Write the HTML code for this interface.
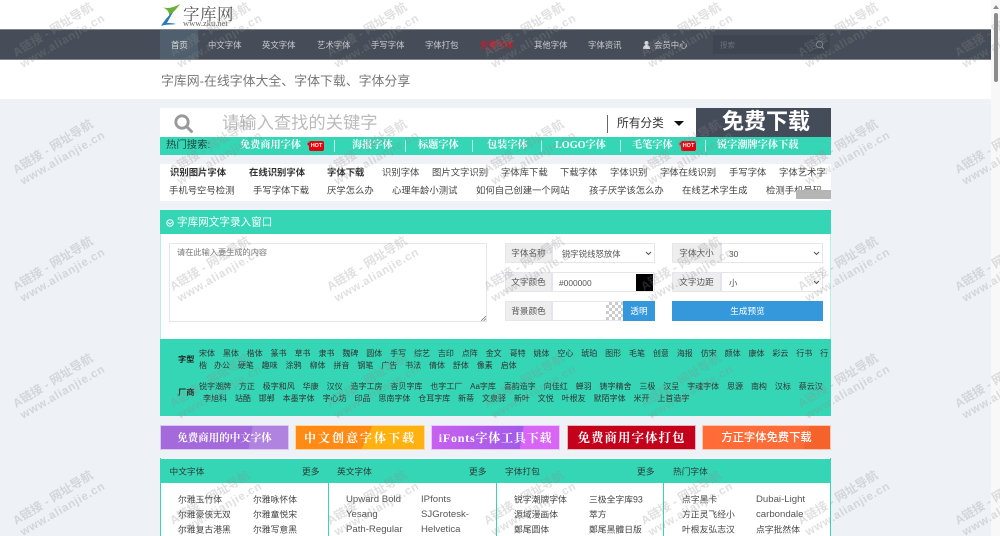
<!DOCTYPE html>
<html lang="zh-CN">
<head>
<meta charset="utf-8">
<title>字库网-在线字体大全、字体下载、字体分享</title>
<style>
html,body{margin:0;padding:0;width:1000px;height:536px;overflow:hidden;background:#fff}
body{position:relative;font-family:"Liberation Sans","Noto Sans CJK SC",sans-serif;color:#333}
.b{position:absolute;box-sizing:border-box}
.t{position:absolute;white-space:nowrap;transform:translateY(-50%);line-height:1}
.nav{font-size:8.4px;color:#c9ccd1;top:45px}
.ad{font-size:9.35px;color:#444}
.ad.s{font-weight:bold;color:#333}
.hot{font-family:"Liberation Serif","Noto Serif CJK SC",serif;font-weight:bold;color:#fff;font-size:10.2px;top:146px}
.sep{position:absolute;top:140px;width:1px;height:12px;background:#bff3e6}
.hotbadge{position:absolute;top:141px;width:15px;height:10px;background:#e8000d;border-radius:2px;color:#fff;font-size:5.5px;font-weight:bold;line-height:10px;text-align:center}
.hotbadge:before{content:"";position:absolute;left:-2px;top:1px;border-top:2px solid transparent;border-bottom:2px solid transparent;border-right:2px solid #e8000d}
.fl{font-size:8px;color:#333}
.fl span{display:inline-block;margin-right:7.9px}
.ban{position:absolute;top:425px;height:25px;color:#fff;text-align:center;line-height:25px;font-weight:bold;font-family:"Liberation Serif","Noto Serif CJK SC",serif;box-sizing:border-box}
.hd{font-size:8.7px;color:#2d3a36;top:472px}
.li{font-size:8.8px;color:#444}
.en{font-size:9.6px;color:#555}
.lab{position:absolute;background:#eee;border:1px solid #e5e5ee;box-sizing:border-box;font-size:8.6px;color:#555;text-align:center}
.inp{position:absolute;background:#fff;border:1px solid #e5e5ee;box-sizing:border-box;font-size:8.4px;color:#555}
svg.wm{position:absolute;left:0;top:0;pointer-events:none}
svg.wm text{font-family:"Liberation Sans","Noto Sans CJK SC",sans-serif;font-weight:bold;fill:#8d8d8d;fill-opacity:.27}
</style>
</head>
<body>
<div class="b" style="left:0;top:99px;width:991px;height:437px;background:#eef1f6"></div>
<div class="b" style="left:991px;top:0;width:9px;height:536px;background:#f8f8f8"></div>
<div class="b" style="left:994px;top:13px;width:4px;height:69px;background:#8b8b8b;border-radius:2px"></div>
<div class="b" style="left:993px;top:5px;width:0;height:0;border-left:3px solid transparent;border-right:3px solid transparent;border-bottom:4px solid #8b8b8b"></div>

<svg class="b" style="left:160px;top:3px" width="22" height="24" viewBox="0 0 22 24">
<path d="M2 4 C7 6 13 5 20 1 C16 7 12 10 9 14 C10 9 7 6 2 4Z" fill="#6cae3c"/>
<path d="M13 9 C9 12 4 18 1 23 C6 21 11 22 16 21 C12 20 9 20 7 20 C9 16 11 13 13 9Z" fill="#2a7ab8"/>
</svg>
<div class="t" style="left:183px;top:13px;font:16.500px 'Liberation Serif','Noto Serif CJK SC',serif;color:#555;letter-spacing:.5px">字库网</div>
<div class="t" style="left:183px;top:23px;font:8.500px 'Liberation Serif',serif;color:#666">www.zku.net</div>

<div class="b" style="left:0;top:29px;width:991px;height:31px;background:#474d58;border-top:1px solid #81858c;border-bottom:1px solid #81858c"></div>
<div class="b" style="left:160px;top:30px;width:38px;height:29px;background:#4f5f6d"></div>
<div class="t nav" style="left:171px;color:#e4e6e8">首页</div>
<div class="t nav" style="left:208px">中文字体</div>
<div class="t nav" style="left:262px">英文字体</div>
<div class="t nav" style="left:317px">艺术字体</div>
<div class="t nav" style="left:371px">手写字体</div>
<div class="t nav" style="left:425px">字体打包</div>
<div class="t nav" style="left:480px;color:#e8101c">免费字体</div>
<div class="t nav" style="left:534px">其他字体</div>
<div class="t nav" style="left:588px">字体资讯</div>
<svg class="b" style="left:643px;top:41px" width="7" height="8" viewBox="0 0 7 8"><circle cx="3.5" cy="2" r="2" fill="#d5d7da"/><path d="M0 8C0 5 1.5 4 3.5 4S7 5 7 8Z" fill="#d5d7da"/></svg>
<div class="t nav" style="left:654px">会员中心</div>
<div class="b" style="left:713px;top:35px;width:117px;height:19px;background:#3f4551"></div>
<div class="t" style="left:720px;top:45px;font-size:7.5px;color:#6a707b">搜索</div>
<svg class="b" style="left:815px;top:40px" width="10" height="10" viewBox="0 0 10 10" fill="none" stroke="#7c818a"><circle cx="4.5" cy="4.5" r="3.2"/><path d="M7 7l2 2"/></svg>

<div class="t" style="left:161px;top:82px;font-size:12.900px;color:#777">字库网-在线字体大全、字体下载、字体分享</div>

<div class="b" style="left:160px;top:108px;width:671px;height:29px;background:#fff"></div>
<svg class="b" style="left:173px;top:113px" width="21" height="21" viewBox="0 0 21 21" fill="none" stroke="#999"><circle cx="9" cy="9" r="6.2" stroke-width="2.8"/><path d="M13.5 13.5l5 5" stroke-width="3" stroke-linecap="round"/></svg>
<div class="t" style="left:222px;top:123px;font-size:17.300px;color:#bbb">请输入查找的关键字</div>
<div class="b" style="left:607px;top:115px;width:1px;height:18px;background:#666"></div>
<div class="t" style="left:617px;top:124px;font-size:11.700px;color:#333">所有分类</div>
<div class="b" style="left:674px;top:121px;width:0;height:0;border-left:5px solid transparent;border-right:5px solid transparent;border-top:5px solid #111"></div>
<div class="b" style="left:160px;top:137px;width:671px;height:18px;background:#35d6b5"></div>
<div class="b" style="left:696px;top:108px;width:135px;height:29px;background:#444b59"></div>
<div class="t" style="left:722px;top:122px;font-size:22px;font-weight:bold;color:#fff">免费下载</div>

<div class="t" style="left:166px;top:146px;font-size:10.400px;color:#24443c">热门搜索:</div>
<div class="t hot" style="left:240px">免费商用字体</div>
<div class="hotbadge" style="left:309px">HOT</div>
<div class="sep" style="left:334px"></div>
<div class="t hot" style="left:352px">海报字体</div>
<div class="sep" style="left:405px"></div>
<div class="t hot" style="left:418px">标题字体</div>
<div class="sep" style="left:472px"></div>
<div class="t hot" style="left:487px">包装字体</div>
<div class="sep" style="left:541px"></div>
<div class="t hot" style="left:555px">LOGO字体</div>
<div class="sep" style="left:620px"></div>
<div class="t hot" style="left:632px">毛笔字体</div>
<div class="hotbadge" style="left:681px">HOT</div>
<div class="sep" style="left:705px"></div>
<div class="t hot" style="left:717px">锐字潮牌字体下载</div>

<div class="b" style="left:160px;top:164px;width:671px;height:37px;background:#fff"></div>
<div class="t ad s" style="left:170px;top:173px">识别图片字体</div>
<div class="t ad s" style="left:249px;top:173px">在线识别字体</div>
<div class="t ad s" style="left:327px;top:173px">字体下载</div>
<div class="t ad" style="left:382px;top:173px">识别字体</div>
<div class="t ad" style="left:432px;top:173px">图片文字识别</div>
<div class="t ad" style="left:501px;top:173px">字体库下载</div>
<div class="t ad" style="left:560px;top:173px">下载字体</div>
<div class="t ad" style="left:610px;top:173px">字体识别</div>
<div class="t ad" style="left:660px;top:173px">字体在线识别</div>
<div class="t ad" style="left:729px;top:173px">手写字体</div>
<div class="t ad" style="left:779px;top:173px">字体艺术字</div>
<div class="t ad" style="left:169px;top:191px">手机号空号检测</div>
<div class="t ad" style="left:253px;top:191px">手写字体下载</div>
<div class="t ad" style="left:327px;top:191px">厌学怎么办</div>
<div class="t ad" style="left:392px;top:191px">心理年龄小测试</div>
<div class="t ad" style="left:476px;top:191px">如何自己创建一个网站</div>
<div class="t ad" style="left:589px;top:191px">孩子厌学该怎么办</div>
<div class="t ad" style="left:682px;top:191px">在线艺术字生成</div>
<div class="t ad" style="left:766px;top:191px">检测手机号码</div>
<div class="b" style="left:796px;top:190px;width:35px;height:9px;background:#b5b5b5"></div>

<div class="b" style="left:160px;top:210px;width:671px;height:24px;background:#35d6b5"></div>
<svg class="b" style="left:166px;top:219px" width="8" height="8" viewBox="0 0 8 8" fill="none" stroke="#fff"><circle cx="4" cy="4" r="3.2"/><path d="M2 3.5l2 1.5 2-1.5"/></svg>
<div class="t" style="left:177px;top:223px;font-size:10.600px;color:#fff">字库网文字录入窗口</div>
<div class="b" style="left:160px;top:234px;width:671px;height:105px;background:#fff;border-left:1px solid #b5f0e3;border-right:1px solid #b5f0e3"></div>
<div class="b" style="left:169px;top:243px;width:318px;height:79px;border:1px solid #e5e5ee;background:#fff"></div>
<svg class="b" style="left:481px;top:316px" width="5" height="5" viewBox="0 0 5 5" stroke="#666" stroke-width=".7"><path d="M0 5L5 0M2.5 5L5 2.5"/></svg>
<div class="t" style="left:177px;top:253px;font-size:8.200px;color:#777">请在此输入要生成的内容</div>

<div class="inp" style="left:552px;top:243px;width:103px;height:20px"></div>
<div class="lab" style="left:505px;top:243px;width:47px;height:20px;line-height:18px">字体名称</div>
<div class="t" style="left:562px;top:254px;font-size:8.400px;color:#555">锐字锐线怒放体</div>
<svg class="b" style="left:645px;top:251px" width="7" height="5" viewBox="0 0 7 5" fill="none" stroke="#555"><path d="M1 1l2.500 2.500L6 1"/></svg>
<div class="inp" style="left:721px;top:243px;width:102px;height:20px"></div>
<div class="lab" style="left:672px;top:243px;width:49px;height:20px;line-height:18px">字体大小</div>
<div class="t" style="left:729px;top:254px;font-size:8.400px;color:#555">30</div>
<svg class="b" style="left:813px;top:251px" width="7" height="5" viewBox="0 0 7 5" fill="none" stroke="#555"><path d="M1 1l2.500 2.500L6 1"/></svg>

<div class="inp" style="left:552px;top:272px;width:103px;height:20px"></div>
<div class="lab" style="left:505px;top:272px;width:47px;height:20px;line-height:18px">文字颜色</div>
<div class="t" style="left:559px;top:283px;font-size:8.400px;color:#555">#000000</div>
<div class="b" style="left:636px;top:274px;width:17px;height:17px;background:#000"></div>
<div class="inp" style="left:721px;top:272px;width:102px;height:20px"></div>
<div class="lab" style="left:672px;top:272px;width:49px;height:20px;line-height:18px">文字边距</div>
<div class="t" style="left:729px;top:283px;font-size:8.400px;color:#555">小</div>
<svg class="b" style="left:813px;top:280px" width="7" height="5" viewBox="0 0 7 5" fill="none" stroke="#555"><path d="M1 1l2.500 2.500L6 1"/></svg>

<div class="inp" style="left:552px;top:301px;width:71px;height:20px"></div>
<div class="lab" style="left:505px;top:301px;width:47px;height:20px;line-height:18px">背景颜色</div>
<div class="b" style="left:606px;top:302px;width:17px;height:18px;background:repeating-conic-gradient(#ccc 0 25%,#fff 0 50%) 0 0/6px 6px"></div>
<div class="b" style="left:623px;top:301px;width:32px;height:20px;background:#3498db;color:#fff;font-size:8.600px;line-height:20px;text-align:center">透明</div>
<div class="b" style="left:672px;top:301px;width:151px;height:20px;background:#3498db;color:#fff;font-size:8.600px;line-height:20px;text-align:center">生成预览</div>

<div class="b" style="left:160px;top:339px;width:671px;height:77px;background:#35d6b5"></div>
<div class="t" style="left:178px;top:360px;font-size:8.200px;font-weight:bold;color:#222">字型</div>
<div class="t" style="left:178px;top:393px;font-size:8.200px;font-weight:bold;color:#222">厂商</div>
<div class="t fl" style="left:199px;top:354px"><span>宋体</span><span>黑体</span><span>楷体</span><span>篆书</span><span>草书</span><span>隶书</span><span>魏碑</span><span>圆体</span><span>手写</span><span>综艺</span><span>吉印</span><span>点阵</span><span>金文</span><span>哥特</span><span>姚体</span><span>空心</span><span>琥珀</span><span>图形</span><span>毛笔</span><span>创意</span><span>海报</span><span>仿宋</span><span>颜体</span><span>康体</span><span>彩云</span><span>行书</span><span>行</span></div>
<div class="t fl" style="left:199px;top:366px"><span style="margin-right:7px">楷</span><span>办公</span><span>硬笔</span><span>趣味</span><span>涂鸦</span><span>柳体</span><span>拼音</span><span>钢笔</span><span>广告</span><span>书法</span><span>倩体</span><span>舒体</span><span>像素</span><span>启体</span></div>
<div class="t fl" style="left:199px;top:387px"><span>锐字潮牌</span><span>方正</span><span>极字和风</span><span>华康</span><span>汉仪</span><span>造字工房</span><span>杳贝字库</span><span>也字工厂</span><span>Aa字库</span><span>喜韵造字</span><span>向佳红</span><span>蝉羽</span><span>铸字精舍</span><span>三极</span><span>汉呈</span><span>字魂字体</span><span>思源</span><span>南构</span><span>汉标</span><span>蔡云汉</span></div>
<div class="t fl" style="left:203px;top:399px"><span>李旭科</span><span>站酷</span><span>邯郸</span><span>本墨字体</span><span>字心坊</span><span>印品</span><span>思南字体</span><span>仓耳字库</span><span>新蒂</span><span>文泉驿</span><span>新叶</span><span>文悦</span><span>叶根友</span><span>默陌字体</span><span>米开</span><span>上首造字</span></div>

<div class="ban" style="left:160px;width:129px;background:linear-gradient(100deg,#a469da 70%,#b183e0 70%);font-size:10.500px;border:1px solid #d9c8f0">免费商用的中文字体</div>
<div class="ban" style="left:295px;width:130px;background:linear-gradient(115deg,#ff8a14 55%,#ffb10f 55%);font-size:12px;letter-spacing:2px;border:1px solid #ffd99a">中文创意字体下载</div>
<div class="ban" style="left:431px;width:129px;background:linear-gradient(100deg,#c960f0,#a05be8 70%,#d865f5 70%);font-size:12px;letter-spacing:.8px;border:1px solid #ecc5f8">iFonts字体工具下载</div>
<div class="ban" style="left:567px;width:129px;background:#c4001a;font-size:12.500px;letter-spacing:1px;border:1px solid #e9b3ba">免费商用字体打包</div>
<div class="ban" style="left:702px;width:129px;background:linear-gradient(105deg,#ff6c38 80%,#f5622c 80%);font-size:11.300px;border:1px solid #ffc6ae;font-family:'Liberation Sans','Noto Sans CJK SC',sans-serif;font-weight:500">方正字体免费下载</div>

<div class="b" style="left:160px;top:458px;width:671px;height:78px;background:#fff;border-left:1px solid #35d6b5;border-right:1px solid #35d6b5"></div>
<div class="b" style="left:160px;top:459px;width:671px;height:24px;background:#35d6b5"></div>
<div class="b" style="left:328px;top:483px;width:1px;height:53px;background:#35d6b5"></div>
<div class="b" style="left:496px;top:483px;width:1px;height:53px;background:#35d6b5"></div>
<div class="b" style="left:663px;top:483px;width:1px;height:53px;background:#35d6b5"></div>
<div class="t hd" style="left:169.500px">中文字体</div><div class="t hd" style="left:302px">更多</div>
<div class="t hd" style="left:337px">英文字体</div><div class="t hd" style="left:469px">更多</div>
<div class="t hd" style="left:505px">字体打包</div><div class="t hd" style="left:637px">更多</div>
<div class="t hd" style="left:673px">热门字体</div>

<div class="t li" style="left:178px;top:500px">尔雅玉竹体</div><div class="t li" style="left:253px;top:500px">尔雅咏怀体</div>
<div class="t li" style="left:178px;top:515px">尔雅豪侠无双</div><div class="t li" style="left:253px;top:515px">尔雅童悦宋</div>
<div class="t li" style="left:178px;top:530px">尔雅复古港黑</div><div class="t li" style="left:253px;top:530px">尔雅写意黑</div>

<div class="t en" style="left:346px;top:500px">Upward Bold</div><div class="t en" style="left:421px;top:500px">IPfonts</div>
<div class="t en" style="left:346px;top:515px">Yesang</div><div class="t en" style="left:421px;top:515px">SJGrotesk-</div>
<div class="t en" style="left:346px;top:530px">Path-Regular</div><div class="t en" style="left:421px;top:530px">Helvetica</div>

<div class="t li" style="left:514px;top:500px">锐字潮牌字体</div><div class="t li" style="left:589px;top:500px">三极全字库93</div>
<div class="t li" style="left:514px;top:515px">源域漫画体</div><div class="t li" style="left:589px;top:515px">萃方</div>
<div class="t li" style="left:514px;top:530px">鄭尾圆体</div><div class="t li" style="left:589px;top:530px">鄭尾黑體日版</div>

<div class="t li" style="left:682px;top:500px">点字黑卡</div><div class="t en" style="left:756px;top:500px">Dubai-Light</div>
<div class="t li" style="left:682px;top:515px">方正灵飞经小</div><div class="t en" style="left:756px;top:515px">carbondale</div>
<div class="t li" style="left:682px;top:530px">叶根友弘志汉</div><div class="t li" style="left:756px;top:530px">点字批然体</div>

<svg class="wm" width="1000" height="536" viewBox="0 0 1000 536">
<g font-size="12">
<text x="16" y="57" transform="rotate(-31.500 16 57)">A链接 - 网址导航</text><text x="173" y="57" transform="rotate(-31.500 173 57)">A链接 - 网址导航</text><text x="330" y="57" transform="rotate(-31.500 330 57)">A链接 - 网址导航</text><text x="487" y="57" transform="rotate(-31.500 487 57)">A链接 - 网址导航</text><text x="644" y="57" transform="rotate(-31.500 644 57)">A链接 - 网址导航</text><text x="801" y="57" transform="rotate(-31.500 801 57)">A链接 - 网址导航</text><text x="958" y="57" transform="rotate(-31.500 958 57)">A链接 - 网址导航</text>
<text x="16" y="174" transform="rotate(-31.500 16 174)">A链接 - 网址导航</text><text x="173" y="174" transform="rotate(-31.500 173 174)">A链接 - 网址导航</text><text x="330" y="174" transform="rotate(-31.500 330 174)">A链接 - 网址导航</text><text x="487" y="174" transform="rotate(-31.500 487 174)">A链接 - 网址导航</text><text x="644" y="174" transform="rotate(-31.500 644 174)">A链接 - 网址导航</text><text x="801" y="174" transform="rotate(-31.500 801 174)">A链接 - 网址导航</text><text x="958" y="174" transform="rotate(-31.500 958 174)">A链接 - 网址导航</text>
<text x="16" y="291" transform="rotate(-31.500 16 291)">A链接 - 网址导航</text><text x="173" y="291" transform="rotate(-31.500 173 291)">A链接 - 网址导航</text><text x="330" y="291" transform="rotate(-31.500 330 291)">A链接 - 网址导航</text><text x="487" y="291" transform="rotate(-31.500 487 291)">A链接 - 网址导航</text><text x="644" y="291" transform="rotate(-31.500 644 291)">A链接 - 网址导航</text><text x="801" y="291" transform="rotate(-31.500 801 291)">A链接 - 网址导航</text><text x="958" y="291" transform="rotate(-31.500 958 291)">A链接 - 网址导航</text>
<text x="16" y="408" transform="rotate(-31.500 16 408)">A链接 - 网址导航</text><text x="173" y="408" transform="rotate(-31.500 173 408)">A链接 - 网址导航</text><text x="330" y="408" transform="rotate(-31.500 330 408)">A链接 - 网址导航</text><text x="487" y="408" transform="rotate(-31.500 487 408)">A链接 - 网址导航</text><text x="644" y="408" transform="rotate(-31.500 644 408)">A链接 - 网址导航</text><text x="801" y="408" transform="rotate(-31.500 801 408)">A链接 - 网址导航</text><text x="958" y="408" transform="rotate(-31.500 958 408)">A链接 - 网址导航</text>
<text x="16" y="525" transform="rotate(-31.500 16 525)">A链接 - 网址导航</text><text x="173" y="525" transform="rotate(-31.500 173 525)">A链接 - 网址导航</text><text x="330" y="525" transform="rotate(-31.500 330 525)">A链接 - 网址导航</text><text x="487" y="525" transform="rotate(-31.500 487 525)">A链接 - 网址导航</text><text x="644" y="525" transform="rotate(-31.500 644 525)">A链接 - 网址导航</text><text x="801" y="525" transform="rotate(-31.500 801 525)">A链接 - 网址导航</text><text x="958" y="525" transform="rotate(-31.500 958 525)">A链接 - 网址导航</text>
</g>
<g font-size="11.500" letter-spacing=".7">
<text x="23" y="68" transform="rotate(-30 23 68)">www.alianjie.cn</text><text x="180" y="68" transform="rotate(-30 180 68)">www.alianjie.cn</text><text x="337" y="68" transform="rotate(-30 337 68)">www.alianjie.cn</text><text x="494" y="68" transform="rotate(-30 494 68)">www.alianjie.cn</text><text x="651" y="68" transform="rotate(-30 651 68)">www.alianjie.cn</text><text x="808" y="68" transform="rotate(-30 808 68)">www.alianjie.cn</text><text x="965" y="68" transform="rotate(-30 965 68)">www.alianjie.cn</text>
<text x="23" y="185" transform="rotate(-30 23 185)">www.alianjie.cn</text><text x="180" y="185" transform="rotate(-30 180 185)">www.alianjie.cn</text><text x="337" y="185" transform="rotate(-30 337 185)">www.alianjie.cn</text><text x="494" y="185" transform="rotate(-30 494 185)">www.alianjie.cn</text><text x="651" y="185" transform="rotate(-30 651 185)">www.alianjie.cn</text><text x="808" y="185" transform="rotate(-30 808 185)">www.alianjie.cn</text><text x="965" y="185" transform="rotate(-30 965 185)">www.alianjie.cn</text>
<text x="23" y="302" transform="rotate(-30 23 302)">www.alianjie.cn</text><text x="180" y="302" transform="rotate(-30 180 302)">www.alianjie.cn</text><text x="337" y="302" transform="rotate(-30 337 302)">www.alianjie.cn</text><text x="494" y="302" transform="rotate(-30 494 302)">www.alianjie.cn</text><text x="651" y="302" transform="rotate(-30 651 302)">www.alianjie.cn</text><text x="808" y="302" transform="rotate(-30 808 302)">www.alianjie.cn</text><text x="965" y="302" transform="rotate(-30 965 302)">www.alianjie.cn</text>
<text x="23" y="419" transform="rotate(-30 23 419)">www.alianjie.cn</text><text x="180" y="419" transform="rotate(-30 180 419)">www.alianjie.cn</text><text x="337" y="419" transform="rotate(-30 337 419)">www.alianjie.cn</text><text x="494" y="419" transform="rotate(-30 494 419)">www.alianjie.cn</text><text x="651" y="419" transform="rotate(-30 651 419)">www.alianjie.cn</text><text x="808" y="419" transform="rotate(-30 808 419)">www.alianjie.cn</text><text x="965" y="419" transform="rotate(-30 965 419)">www.alianjie.cn</text>
<text x="23" y="536" transform="rotate(-30 23 536)">www.alianjie.cn</text><text x="180" y="536" transform="rotate(-30 180 536)">www.alianjie.cn</text><text x="337" y="536" transform="rotate(-30 337 536)">www.alianjie.cn</text><text x="494" y="536" transform="rotate(-30 494 536)">www.alianjie.cn</text><text x="651" y="536" transform="rotate(-30 651 536)">www.alianjie.cn</text><text x="808" y="536" transform="rotate(-30 808 536)">www.alianjie.cn</text><text x="965" y="536" transform="rotate(-30 965 536)">www.alianjie.cn</text>
</g>
</svg>
</body>
</html>
